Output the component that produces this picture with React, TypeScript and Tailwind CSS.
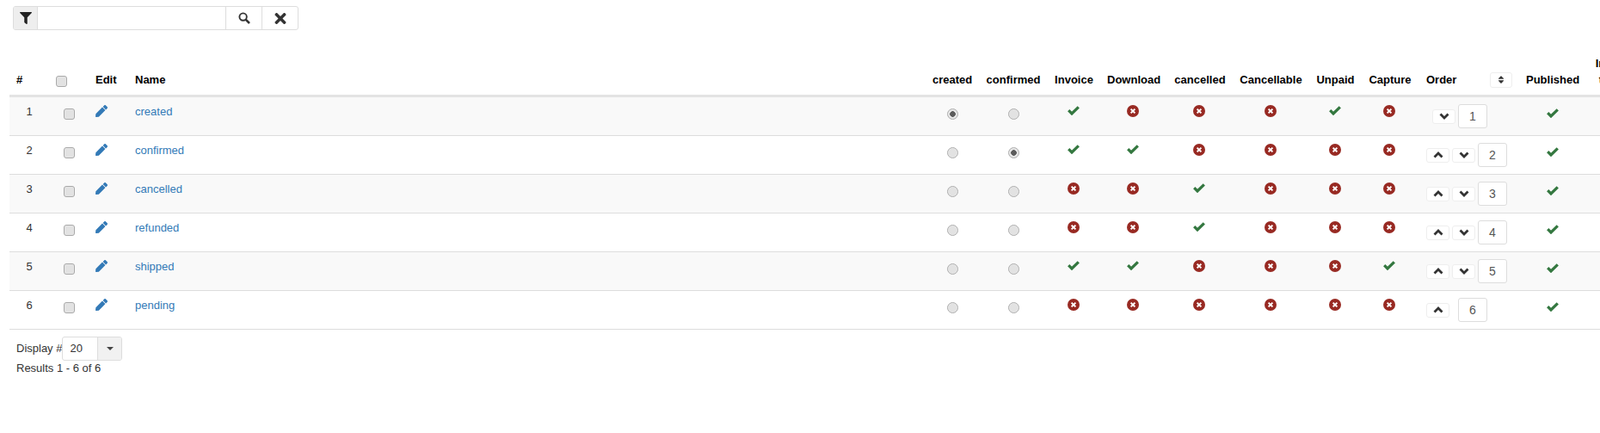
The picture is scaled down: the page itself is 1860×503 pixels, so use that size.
import React from "react";
import { FaFilter, FaPen, FaSort, FaTimes } from "react-icons/fa";

type OrderStatus = {
  id: number;
  name: string;
  flags: boolean[];
};

const FLAG_COLUMNS = ["Invoice", "Download", "cancelled", "Cancellable", "Unpaid", "Capture"];

const STATUSES: OrderStatus[] = [
  { id: 1, name: "created", flags: [true, false, false, false, true, false] },
  { id: 2, name: "confirmed", flags: [true, true, false, false, false, false] },
  { id: 3, name: "cancelled", flags: [false, false, true, false, false, false] },
  { id: 4, name: "refunded", flags: [false, false, true, false, false, false] },
  { id: 5, name: "shipped", flags: [true, true, false, false, false, true] },
  { id: 6, name: "pending", flags: [false, false, false, false, false, false] },
];

const CHECKBOX_CLASS =
  "block h-[13px] w-[13px] appearance-none rounded-[3px] border border-[#a9a9a9] bg-[#e2e2e2] shadow-[inset_0_0_1px_#fff]";

const RADIO_CLASS =
  "block h-[13px] w-[13px] appearance-none rounded-full border border-[#adadad] bg-[#e2e2e2] shadow-[inset_0_0_1px_#fff]";

const RADIO_ON_CLASS =
  "block h-[13px] w-[13px] appearance-none rounded-full border border-[#adadad] bg-[radial-gradient(circle,#5c5c5c_0,#5c5c5c_3px,#e6e6e6_3.6px)]";

const TH_CENTER = "border-b-[3px] border-[#e3e3e3] p-2 text-center align-bottom font-bold text-black";
const TH_LEFT = "border-b-[3px] border-[#e3e3e3] p-2 text-left align-bottom font-bold text-black";
const TD = "border-b border-[#ddd] p-2 align-top";

// glyphicon-style tick, heavier than the icon pack's
function Tick({ className }: { className?: string }) {
  return (
    <svg viewBox="0 0 14 11" className={`block h-[11px] w-[14px] text-[#33773f] ${className ?? ""}`}>
      <polyline points="1.2,5.2 5,9 12.8,1.4" fill="none" stroke="currentColor" strokeWidth="3.2" />
    </svg>
  );
}

function RemoveSign() {
  return (
    <svg viewBox="0 0 14 14" className="mx-auto mt-[1px] block h-[14px] w-[14px] -translate-x-px">
      <circle cx="7" cy="7" r="7" fill="#982a23" />
      <path d="M4.6 4.6 9.4 9.4M9.4 4.6 4.6 9.4" fill="none" stroke="#fff" strokeWidth="2" />
    </svg>
  );
}

function Chevron({ up }: { up?: boolean }) {
  return (
    <svg viewBox="0 0 12 8" className="block h-[8px] w-[12px] text-[#333]">
      <polyline
        points={up ? "1.5,6.5 6,2 10.5,6.5" : "1.5,1.5 6,6 10.5,1.5"}
        fill="none"
        stroke="currentColor"
        strokeWidth="2.8"
      />
    </svg>
  );
}

function SearchIcon() {
  return (
    <svg viewBox="0 0 14 14" className="block h-[14px] w-[14px] text-[#333]">
      <circle cx="5.6" cy="5.6" r="4.2" fill="none" stroke="currentColor" strokeWidth="1.9" />
      <line x1="8.6" y1="8.6" x2="13" y2="13" stroke="currentColor" strokeWidth="2.6" />
    </svg>
  );
}

function FlagIcon({ on }: { on: boolean }) {
  return on ? <Tick className="mx-auto mt-[2px] -translate-x-px" /> : <RemoveSign />;
}

function OrderButton({ up }: { up?: boolean }) {
  return (
    <button className="flex h-[17px] w-[27px] items-center justify-center rounded-[3px] border border-[#eee] bg-white">
      <Chevron up={up} />
    </button>
  );
}

function OrderCell({ row, last }: { row: number; last: number }) {
  const value = (
    <input
      readOnly
      value={row}
      className="h-[28px] w-[34px] rounded-[3px] border border-[#ddd] bg-white text-center text-[14px] text-[#555]"
    />
  );
  if (row === 1) {
    return (
      <div className="ml-[8px] flex items-center gap-[3px]">
        <OrderButton />
        {value}
      </div>
    );
  }
  if (row === last) {
    return (
      <div className="ml-px flex items-center gap-[10px]">
        <OrderButton up />
        {value}
      </div>
    );
  }
  return (
    <div className="ml-px flex items-center gap-[3px]">
      <OrderButton up />
      <OrderButton />
      {value}
    </div>
  );
}

function FilterBar() {
  return (
    <div className="ml-[15px] flex h-[28px] w-[332px] overflow-hidden rounded-[3px] border border-[#ddd] bg-white">
      <span className="flex w-[28px] items-center justify-center border-r border-[#ddd] bg-[#eee]">
        <FaFilter className="h-[14px] w-[14px] text-[#222]" />
      </span>
      <input className="min-w-0 flex-1 outline-none" />
      <button className="flex w-[42px] items-center justify-center border-l border-[#ddd]">
        <SearchIcon />
      </button>
      <button className="flex w-[42px] items-center justify-center border-l border-[#ddd]">
        <FaTimes className="h-[19px] w-[14px] text-[#333]" />
      </button>
    </div>
  );
}

export default function App() {
  return (
    <div className="h-[503px] w-[1860px] overflow-hidden bg-white pt-[7px] font-['Liberation_Sans',Arial,sans-serif] text-[13px] leading-[18.57px] text-[#333]">
      <FilterBar />

      <div className="mt-[22px] pl-[11px]">
        <table className="w-[1900px] table-fixed border-separate border-spacing-0">
          <colgroup>
            <col className="w-[46px]" />
            <col className="w-[46px]" />
            <col className="w-[46px]" />
            <col className="w-[927px]" />
            <col className="w-[62px]" />
            <col className="w-[80px]" />
            <col className="w-[61px]" />
            <col className="w-[78px]" />
            <col className="w-[76px]" />
            <col className="w-[89px]" />
            <col className="w-[61px]" />
            <col className="w-[66px]" />
            <col className="w-[117px]" />
            <col className="w-[78px]" />
            <col className="w-[67px]" />
          </colgroup>
          <thead>
            <tr>
              <th className={TH_LEFT}>#</th>
              <th className={TH_LEFT}>
                <input type="checkbox" className={`${CHECKBOX_CLASS} mb-[1px] mt-[2px]`} />
              </th>
              <th className={TH_LEFT}>Edit</th>
              <th className={TH_LEFT}>Name</th>
              <th className={TH_CENTER}>created</th>
              <th className={TH_CENTER}>confirmed</th>
              {FLAG_COLUMNS.map((col) => (
                <th key={col} className={TH_CENTER}>
                  {col}
                </th>
              ))}
              <th className={TH_LEFT}>
                <div className="flex items-center justify-between">
                  <span className="pl-px">Order</span>
                  <button className="flex h-[18px] w-[26px] items-center justify-center rounded-[3px] border border-[#eee] bg-white">
                    <FaSort className="h-[11px] w-[8px] text-[#333]" />
                  </button>
                </div>
              </th>
              <th className={TH_CENTER}>Published</th>
              <th className={TH_CENTER}>
                Include
                <br />
                taxes:
              </th>
            </tr>
          </thead>
          <tbody>
            {STATUSES.map((status, index) => {
              const rowBg = index % 2 === 0 ? "bg-[#f9f9f9]" : "bg-white";
              return (
                <tr key={status.id} className={rowBg}>
                  <td className={`${TD} text-center`}>{status.id}</td>
                  <td className={TD}>
                    <input type="checkbox" className={`${CHECKBOX_CLASS} mx-auto mt-[5px]`} />
                  </td>
                  <td className={TD}>
                    <FaPen className="mt-[1px] block h-[14px] w-[14px] text-[#337ab7]" />
                  </td>
                  <td className={TD}>
                    <a className="text-[#337ab7]">{status.name}</a>
                  </td>
                  <td className={TD}>
                    <input
                      type="radio"
                      readOnly
                      checked={index === 0}
                      name={`created-${status.id}`}
                      className={`${index === 0 ? RADIO_ON_CLASS : RADIO_CLASS} mx-auto mt-[5px]`}
                    />
                  </td>
                  <td className={TD}>
                    <input
                      type="radio"
                      readOnly
                      checked={index === 1}
                      name={`confirmed-${status.id}`}
                      className={`${index === 1 ? RADIO_ON_CLASS : RADIO_CLASS} mx-auto mt-[5px]`}
                    />
                  </td>
                  {status.flags.map((on, i) => (
                    <td key={FLAG_COLUMNS[i]} className={TD}>
                      <FlagIcon on={on} />
                    </td>
                  ))}
                  <td className={TD}>
                    <OrderCell row={status.id} last={STATUSES.length} />
                  </td>
                  <td className={TD}>
                    <Tick className="mx-auto mt-[5px]" />
                  </td>
                  <td className={TD} />
                </tr>
              );
            })}
          </tbody>
        </table>
      </div>

      <div className="mt-[8px] flex items-center pl-[19px]">
        <span>Display #</span>
        <div className="flex h-[28px] w-[70px] overflow-hidden rounded-[3px] border border-[#ddd] bg-white">
          <span className="flex-1 pl-2 leading-[26px]">20</span>
          <span className="flex w-[28px] items-center justify-center border-l border-[#ddd] bg-[#f1f1f1]">
            <span className="h-0 w-0 border-x-[4px] border-t-[4px] border-x-transparent border-t-[#444]" />
          </span>
        </div>
      </div>
      <div className="pl-[19px]">Results 1 - 6 of 6</div>
    </div>
  );
}
